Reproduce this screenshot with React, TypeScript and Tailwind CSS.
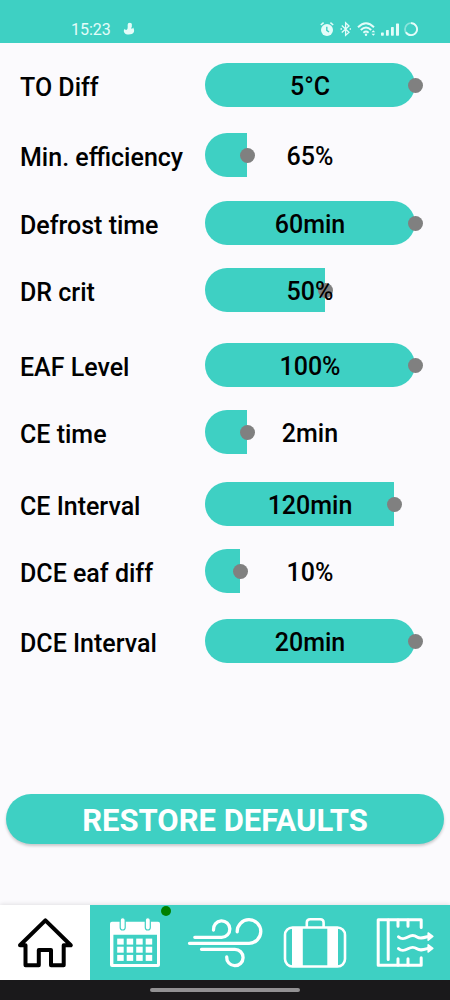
import { useState } from "react";
import type { ReactNode } from "react";

type Setting = {
  id: string;
  label: string;
  unit: string;
  min: number;
  max: number;
  initial: number;
  gap: string;
};

const SETTINGS: Setting[] = [
  { id: "to-diff", label: "TO Diff", unit: "°C", min: 0, max: 5, initial: 5, gap: "mt-5" },
  { id: "min-efficiency", label: "Min. efficiency", unit: "%", min: 60, max: 85, initial: 65, gap: "mt-[26px]" },
  { id: "defrost-time", label: "Defrost time", unit: "min", min: 0, max: 60, initial: 60, gap: "mt-6" },
  { id: "dr-crit", label: "DR crit", unit: "%", min: 10, max: 80, initial: 50, gap: "mt-[23px]" },
  { id: "eaf-level", label: "EAF Level", unit: "%", min: 50, max: 100, initial: 100, gap: "mt-[31px]" },
  { id: "ce-time", label: "CE time", unit: "min", min: 1, max: 6, initial: 2, gap: "mt-[23px]" },
  { id: "ce-interval", label: "CE Interval", unit: "min", min: 30, max: 130, initial: 120, gap: "mt-7" },
  { id: "dce-eaf-diff", label: "DCE eaf diff", unit: "%", min: 5, max: 35, initial: 10, gap: "mt-[23px]" },
  { id: "dce-interval", label: "DCE Interval", unit: "min", min: 5, max: 20, initial: 20, gap: "mt-[26px]" },
];

const defaults = () => Object.fromEntries(SETTINGS.map((s) => [s.id, s.initial]));

function StatusBar() {
  return (
    <header className="flex h-[43px] items-end justify-between bg-[#3ed0c3] pr-8 pb-1.5 pl-[71px] text-[#e4fcf9]">
      <div className="flex items-end gap-3">
        <span className="text-base leading-[14px]">15:23</span>
        <svg className="h-4 w-3" viewBox="0 0 12 16" fill="currentColor" aria-hidden="true">
          <circle cx="6.8" cy="4" r="2.2" />
          <path d="M4.7 4.6 L8.8 5 L8.3 7.4 C9 7.9 9.8 7.6 10.2 6.6 C11 8.3 11.4 9.6 10.9 11.1 C10 13.2 8 13.5 5.7 13.5 C3.4 13.5 1.4 12.8 .9 10.7 C.6 9.4 1.2 8.2 2 7.7 C2.2 8.8 3 9.2 3.7 8.8 C4.6 8.2 4.6 7 4.7 5.9 Z" />
        </svg>
      </div>
      <div className="flex items-center gap-1">
        <svg className="h-4 w-[14px]" viewBox="0 0 14 16" aria-hidden="true">
          <circle cx="7" cy="9" r="6" fill="currentColor" />
          <path d="M.8 4 L3.6 1.6 M13.2 4 L10.4 1.6" stroke="currentColor" strokeWidth="1.5" />
          <path d="M6.8 5.7 V9.3 L9 11" fill="none" stroke="#3ed0c3" strokeWidth="1.4" />
        </svg>
        <svg className="h-4 w-[14px]" viewBox="0 0 14 16" fill="none" stroke="currentColor" strokeWidth="1.3" aria-hidden="true">
          <path d="M3.8 4.5 L11 11.3 L7.6 14.4 V1.8 L11 4.9 L3.8 11.5" />
          <path d="M2.5 8 H4 M11.6 8 H13" />
        </svg>
        <svg className="h-4 w-5" viewBox="0 0 20 16" fill="none" stroke="currentColor" strokeWidth="1.9" aria-hidden="true">
          <path d="M2 6.2 Q10 -1.6 18 6.2 M4.8 9 Q10 4 15.2 9 M7.4 11.7 Q10 9.4 12.6 11.7" />
          <circle cx="10" cy="13.8" r="1.2" fill="currentColor" stroke="none" />
          <path d="M15.5 11.2 L17.3 9.2 L19.2 11.2 Z M15.5 12.8 L17.3 14.8 L19.2 12.8 Z" fill="currentColor" stroke="none" />
        </svg>
        <svg className="h-4 w-[19px]" viewBox="0 0 19 16" fill="currentColor" aria-hidden="true">
          <rect x="1" y="11.5" width="2.8" height="3.2" rx=".6" />
          <rect x="6" y="9" width="2.8" height="5.7" rx=".6" />
          <rect x="11" y="6" width="2.8" height="8.7" rx=".6" />
          <rect x="16" y="2.5" width="3" height="12.2" rx=".6" />
        </svg>
        <svg className="h-4 w-[15px]" viewBox="0 0 15 16" fill="none" strokeWidth="1.8" stroke="currentColor" aria-hidden="true">
          <circle cx="8" cy="8.2" r="6" opacity=".45" />
          <path d="M8 2.2 A6 6 0 1 1 2.9 11.3" />
        </svg>
      </div>
    </header>
  );
}

function SettingRow({ setting, value, onChange }: { setting: Setting; value: number; onChange: (v: number) => void }) {
  const { id, label, unit, min, max, gap } = setting;
  const percent = ((value - min) / (max - min)) * 100;
  return (
    <div className={`flex h-11 items-center ${gap}`}>
      <label htmlFor={id} className="w-[185px] shrink-0 pt-1.5 text-[25px] leading-7 font-medium whitespace-nowrap">
        {label}
      </label>
      <div className="relative flex h-full flex-1 items-center justify-center">
        <div className="absolute inset-0 overflow-hidden rounded-full">
          <div className="h-full bg-[#3ed0c3]" style={{ width: `${percent}%` }} />
        </div>
        <input
          id={id}
          type="range"
          min={min}
          max={max}
          value={value}
          onChange={(e) => onChange(Number(e.target.value))}
          className="absolute inset-y-0 -right-2 -left-[7px] cursor-pointer appearance-none bg-transparent [&::-moz-range-thumb]:size-[15px] [&::-moz-range-thumb]:rounded-full [&::-moz-range-thumb]:border-0 [&::-moz-range-thumb]:bg-[#808080] [&::-webkit-slider-thumb]:size-[15px] [&::-webkit-slider-thumb]:appearance-none [&::-webkit-slider-thumb]:rounded-full [&::-webkit-slider-thumb]:bg-[#808080]"
        />
        <output htmlFor={id} className="pointer-events-none relative pt-1 text-[25px] leading-7 font-medium">
          {value}
          {unit}
        </output>
      </div>
    </div>
  );
}

function NavIcon({ children }: { children: ReactNode }) {
  return (
    <svg className="h-[75px] w-[90px]" viewBox="0 0 90 75" fill="none" aria-hidden="true">
      {children}
    </svg>
  );
}

const HomeIcon = () => (
  <NavIcon>
    <path
      d="M25.5 40.3 H20 L45.4 15.4 L70.8 40.3 H63.7 V60.2 H51 V45 H38.8 V60.2 H25.5 Z"
      stroke="#000"
      strokeWidth="4"
      strokeLinejoin="round"
    />
  </NavIcon>
);

const CalendarIcon = () => (
  <NavIcon>
    <path
      fill="#fff"
      fillRule="evenodd"
      d="M22 16.7 H68 Q70 16.7 70 18.7 V60 Q70 62 68 62 H22 Q20 62 20 60 V18.7 Q20 16.7 22 16.7 Z M23.4 29.7 V59 H67 V29.7 Z"
    />
    {[30.2, 55.3].map((x) => (
      <rect key={x} x={x} y="12.6" width="5" height="12.4" rx="2.5" fill="#fff" stroke="#3ed0c3" strokeWidth="1.2" />
    ))}
    {[33.6, 41.7, 49.9].map((y) =>
      [27.2, 36.7, 46.2, 55.7].map((x) => <rect key={`${x}-${y}`} x={x} y={y} width="6.5" height="6" fill="#fff" />),
    )}
  </NavIcon>
);

const WindIcon = () => (
  <NavIcon>
    <g stroke="#fff" strokeWidth="3.3" strokeLinecap="round">
      <path d="M14.8 32.3 H41.5 A8.2 8.2 0 1 0 33.5 25" />
      <path d="M9.5 38.3 H68.7 A11.8 11.8 0 1 0 57.2 26.8" />
      <path d="M21.5 44.3 H54.8 A8.2 8.2 0 1 1 46.7 52" />
    </g>
  </NavIcon>
);

const SuitcaseIcon = () => (
  <NavIcon>
    <rect x="15" y="22.5" width="60" height="39" rx="7.5" stroke="#fff" strokeWidth="2.6" />
    <path d="M22 22 H32.8 V62 H22 Z M57.3 22 H68 V62 H57.3 Z" fill="#fff" />
    <path d="M36.8 22 V17.5 Q36.8 14.2 40.2 14.2 H50.2 Q53.6 14.2 53.6 17.5 V22" stroke="#fff" strokeWidth="2.6" />
  </NavIcon>
);

const ExhaustIcon = () => (
  <NavIcon>
    <g stroke="#fff" strokeWidth="3" strokeLinecap="round" strokeLinejoin="round">
      <path d="M61.2 22.5 V14.8 H18.2 V60.2 H61.2 V52.8" />
      <path d="M28.2 15 V54.5 M38 15 V21.3 M48 15 V21.3 M38 60 V53.7 M48 60 V53.7" />
      <path d="M38.5 31.8 C42 35 45 33.6 48 32 C52 29.8 54 30 57 32 C60 34 63 33 68 31.6" />
      <path d="M38.5 43.6 C42 46.8 45 45.4 48 43.8 C52 41.6 54 41.8 57 43.8 C60 45.8 63 44.8 68 43.4" />
    </g>
    <path
      d="M68.2 28 L72.8 31.5 L68.2 35.2 Z M68.2 39.8 L72.8 43.3 L68.2 47 Z"
      fill="#fff"
      stroke="#fff"
      strokeWidth="1.6"
      strokeLinejoin="round"
    />
  </NavIcon>
);

const TABS = [
  { name: "Home", href: "#home", Icon: HomeIcon, active: true, alert: false },
  { name: "Schedule", href: "#schedule", Icon: CalendarIcon, active: false, alert: true },
  { name: "Air flow", href: "#airflow", Icon: WindIcon, active: false, alert: false },
  { name: "Holiday", href: "#holiday", Icon: SuitcaseIcon, active: false, alert: false },
  { name: "Exhaust", href: "#exhaust", Icon: ExhaustIcon, active: false, alert: false },
];

function BottomNav() {
  return (
    <nav className="flex h-[75px] bg-[#3ed0c3] shadow-[0_-1px_4px_rgba(0,0,0,0.1)]">
      {TABS.map(({ name, href, Icon, active, alert }) => (
        <a
          key={name}
          href={href}
          aria-label={name}
          aria-current={active ? "page" : undefined}
          className={`relative flex flex-1 justify-center ${active ? "bg-white" : ""}`}
        >
          <Icon />
          {alert && <span className="absolute top-px right-[9px] size-[10px] rounded-full bg-[#008000]" />}
        </a>
      ))}
    </nav>
  );
}

export default function App() {
  const [values, setValues] = useState<Record<string, number>>(defaults);
  return (
    <div className="flex min-h-screen flex-col bg-[#fbfafd] font-['Roboto',sans-serif] text-black">
      <StatusBar />
      <main className="flex flex-1 flex-col">
        <div className="pr-[35px] pl-5">
          {SETTINGS.map((setting) => (
            <SettingRow
              key={setting.id}
              setting={setting}
              value={values[setting.id]}
              onChange={(v) => setValues((prev) => ({ ...prev, [setting.id]: v }))}
            />
          ))}
        </div>
        <button
          type="button"
          onClick={() => setValues(defaults())}
          className="mx-1.5 mt-auto mb-[61px] h-[50px] rounded-full bg-[#3ed0c3] pt-1 text-[31px] leading-9 font-bold text-white shadow-[0_2px_3px_rgba(0,0,0,0.2)]"
        >
          RESTORE DEFAULTS
        </button>
      </main>
      <BottomNav />
      <div className="flex h-5 items-center justify-center bg-[#1a191b]">
        <div className="h-1 w-1/3 rounded-full bg-[#929193]" />
      </div>
    </div>
  );
}
